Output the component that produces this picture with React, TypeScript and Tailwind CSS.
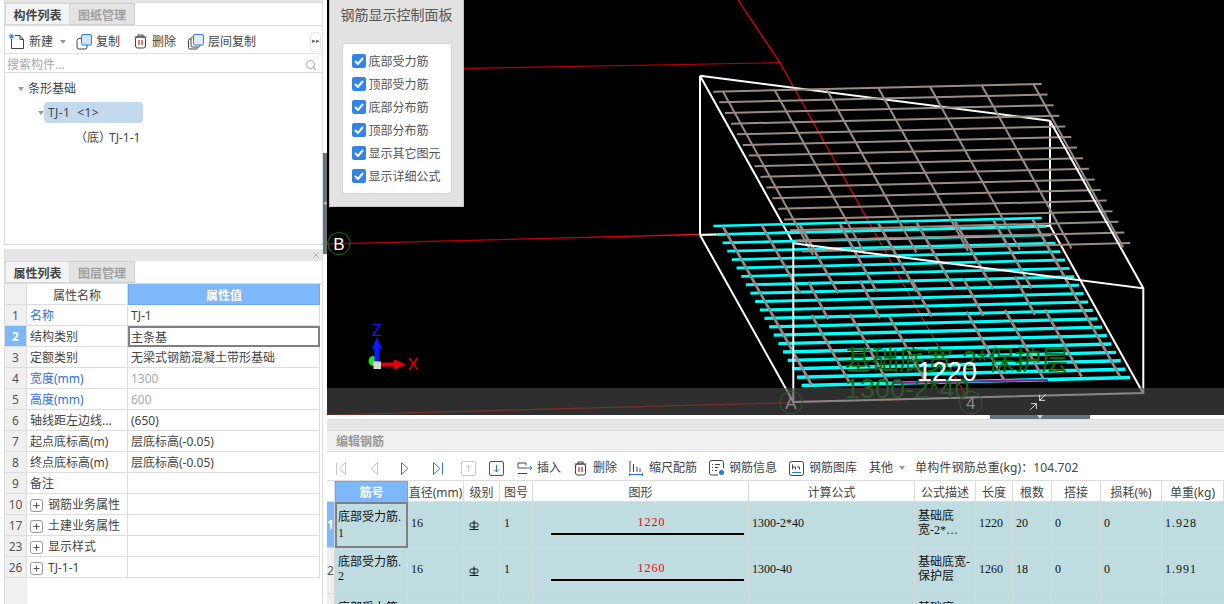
import React from 'react';
import { Minimize2, Search, X } from 'lucide-react';

const SANS = "[font-family:'Noto_Sans','Noto_Sans_CJK_SC',sans-serif]";

// ---------- small toolbar icons ----------
const IconNew = () => (
  <svg width="16" height="16" viewBox="0 0 16 16" fill="none">
    <path d="M2.500 5v9.500h12V5.500L11 1.500H6" stroke="#444" />
    <path d="M11 1.500v4h3.500" stroke="#444" />
    <rect x="0.500" y="0.500" width="4" height="4" fill="#3b8bf0" />
  </svg>
);

const IconCopy = () => (
  <svg width="17" height="16" viewBox="0 0 17 16" fill="none">
    <rect x="1" y="4.500" width="10" height="10.500" rx="2" stroke="#444" fill="#fff" />
    <rect x="5.500" y="0.500" width="10" height="10.500" rx="1.500" stroke="#2f7de0" fill="#cfe3fa" />
  </svg>
);

const IconTrash = () => (
  <svg width="13" height="15" viewBox="0 0 13 15" fill="none">
    <path d="M0.500 3h12M4 3V1h5v2" stroke="#444" />
    <rect x="1.500" y="3" width="10" height="11" rx="2" stroke="#444" />
    <path d="M5 6v5M8 6v5" stroke="#e02020" strokeWidth="1.200" />
  </svg>
);

const IconFloorCopy = () => (
  <svg width="16" height="16" viewBox="0 0 16 16" fill="none">
    <rect x="0.500" y="5" width="9" height="10" rx="1.500" stroke="#444" />
    <rect x="3" y="3" width="9" height="10" rx="1.500" stroke="#444" fill="#fff" />
    <rect x="5.500" y="0.500" width="10" height="10.500" rx="1.500" stroke="#2f7de0" fill="#e2eefc" />
  </svg>
);

const Caret = ({ className = '' }: { className?: string }) => (
  <svg width="6" height="4" viewBox="0 0 6 4" className={className}>
    <path d="M0 0h6L3 4z" fill="#999" />
  </svg>
);

const PlusBox = () => (
  <svg width="13" height="13" viewBox="0 0 13 13" fill="none" className="shrink-0">
    <rect x="0.500" y="0.500" width="12" height="12" rx="2.500" stroke="#999" />
    <path d="M3.500 6.500h6M6.500 3.500v6" stroke="#555" />
  </svg>
);

const NavIcon = ({ dir, bar, active }: { dir: 'l' | 'r'; bar?: boolean; active?: boolean }) => {
  const c = active ? '#2a78dc' : '#c4c4c4';
  return (
    <svg width="11" height="13" viewBox="0 0 11 13" fill="none">
      {dir === 'l' ? (
        <>
          {bar && <path d="M0.500 0.500v12" stroke={c} />}
          <path d="M9.500 0.500v12L3 6.500z" stroke={c} />
        </>
      ) : (
        <>
          <path d="M1.500 0.500v12L8 6.500z" stroke={c} />
          {bar && <path d="M10.500 0.500v12" stroke={c} />}
        </>
      )}
    </svg>
  );
};

const BoxArrow = ({ up }: { up?: boolean }) => (
  <svg width="15" height="15" viewBox="0 0 15 15" fill="none">
    <rect x="0.500" y="0.500" width="14" height="14" rx="1.500" stroke={up ? '#c8c8c8' : '#555'} />
    {up ? (
      <path d="M7.500 11V4M5 6.500l2.500-2.500L10 6.500" stroke="#c8c8c8" />
    ) : (
      <path d="M7.500 4v7M5 8.500l2.500 2.500L10 8.500" stroke="#2a78dc" />
    )}
  </svg>
);

const IconInsert = () => (
  <svg width="16" height="13" viewBox="0 0 16 13" fill="none">
    <path d="M9 3.500V1H1v5h8" stroke="#444" />
    <path d="M1 11.500h9" stroke="#444" />
    <path d="M9 6h6M13 4l2 2-2 2" stroke="#2a78dc" />
  </svg>
);

const IconScale = () => (
  <svg width="14" height="15" viewBox="0 0 14 15" fill="none">
    <path d="M1 0v11M4.500 3v8M8 6v5M11 7.500V11" stroke="#444" />
    <path d="M0.500 13.500h13M0.500 12v3M13.500 12v3" stroke="#2a78dc" />
  </svg>
);

const IconInfo = () => (
  <svg width="16" height="16" viewBox="0 0 16 16" fill="none">
    <path d="M9 15H2.500a2 2 0 0 1-2-2V2.500a2 2 0 0 1 2-2h10a2 2 0 0 1 2 2V8" stroke="#444" />
    <path d="M3 4.500h1M6 4.500h5M3 7.500h1M6 7.500h3M3 10.500h1M6 10.500h2" stroke="#444" />
    <circle cx="12.500" cy="12.500" r="2.500" fill="#2a78dc" />
  </svg>
);

const IconLibrary = () => (
  <svg width="15" height="15" viewBox="0 0 15 15" fill="none">
    <rect x="0.500" y="0.500" width="14" height="14" rx="2" stroke="#444" />
    <path d="M3.500 3.500v5M3.500 6h3v2.500M8 6h2.500v2.500" stroke="#444" />
    <path d="M3 11.500h9" stroke="#2a78dc" />
  </svg>
);

const GradeMark = () => (
  <svg width="10" height="10" viewBox="0 0 10 10" fill="none" className="mt-[3px]">
    <path d="M5 0.500v8.500" stroke="#111" />
    <rect x="1" y="3" width="8" height="4" rx="1.500" stroke="#111" />
    <path d="M0.500 9.500h9" stroke="#111" />
  </svg>
);

// ---------- left panels ----------
const Tabs = ({ first, second }: { first: string; second: string }) => (
  <div className="flex h-[23px] shrink-0 font-bold text-[12px] border-b border-[#ddd]">
    <div className="w-[65px] pt-[3px] bg-[#f4f4f4] border border-[#d8d8d8] flex items-center justify-center text-[#444]">{first}</div>
    <div className="w-[65px] pt-[3px] bg-[#e3e3e3] border border-l-0 border-[#cfcfcf] flex items-center justify-center text-[#a0a0a0]">{second}</div>
  </div>
);

const ComponentList = () => (
  <div className="h-[245px] shrink-0 flex flex-col border-l border-r border-b border-[#ddd]">
    <div className="h-[3px] bg-[#e6e6e6] shrink-0 border-b border-[#ddd]" />
    <Tabs first="构件列表" second="图纸管理" />
    <div className="h-[28px] shrink-0 pt-[4px] flex items-center text-[12px] text-[#444] border-b border-[#e2e2e2] relative">
      <div className="ml-[4px]"><IconNew /></div>
      <span className="ml-[4px]">新建</span>
      <Caret className="ml-[7px]" />
      <div className="ml-[10px]"><IconCopy /></div>
      <span className="ml-[3px]">复制</span>
      <div className="ml-[14px]"><IconTrash /></div>
      <span className="ml-[5px]">删除</span>
      <div className="ml-[12px]"><IconFloorCopy /></div>
      <span className="ml-[4px]">层间复制</span>
      <div className="ml-auto mr-[1px] w-[11px] h-[20px] border border-[#e6e6e6] rounded-sm flex items-center justify-center text-[7px] text-[#666]">▸▸</div>
    </div>
    <div className="h-[19px] shrink-0 pt-[3px] flex items-center justify-between pl-[2px] pr-[5px] text-[12px] text-[#aaa] border-b border-[#ddd]">
      <span>搜索构件...</span>
      <Search size={12} color="#aaa" />
    </div>
    <div className="text-[12px] text-[#444] pt-[5px]">
      <div className="h-[21px] flex items-center pl-[13px]">
        <Caret />
        <span className="ml-[4px]">条形基础</span>
      </div>
      <div className="h-[21px] mt-[3px] flex items-center pl-[33px]">
        <Caret />
        <div className="w-[99px] h-[21px] pt-[1px] bg-[#c2d9f0] rounded-sm flex items-center pl-[4px] whitespace-pre tracking-[0.4px]">TJ-1  &lt;1&gt;</div>
      </div>
      <div className="h-[21px] mt-[4px] flex items-center pl-[70px] whitespace-pre">（底）<span className="-ml-[2px]">TJ-1-1</span></div>
    </div>
  </div>
);

type PropRow = { no: number; name: string; value?: string; nameBlue?: boolean; gray?: boolean; plus?: boolean; active?: boolean };

const PROPS: PropRow[] = [
  { no: 1, name: '名称', value: 'TJ-1', nameBlue: true },
  { no: 2, name: '结构类别', value: '主条基', active: true },
  { no: 3, name: '定额类别', value: '无梁式钢筋混凝土带形基础' },
  { no: 4, name: '宽度(mm)', value: '1300', nameBlue: true, gray: true },
  { no: 5, name: '高度(mm)', value: '600', nameBlue: true, gray: true },
  { no: 6, name: '轴线距左边线...', value: '(650)' },
  { no: 7, name: '起点底标高(m)', value: '层底标高(-0.05)' },
  { no: 8, name: '终点底标高(m)', value: '层底标高(-0.05)' },
  { no: 9, name: '备注' },
  { no: 10, name: '钢筋业务属性', plus: true },
  { no: 17, name: '土建业务属性', plus: true },
  { no: 23, name: '显示样式', plus: true },
  { no: 26, name: 'TJ-1-1', plus: true }
];

const PropertyList = () => (
  <div className="flex-1 flex flex-col border-l border-r border-[#ddd] mt-[4px] min-h-0">
    <div className="h-[12px] shrink-0 bg-[#e6e6e6] flex items-center justify-end pr-[1px]">
      <X size={10} color="#aaa" />
    </div>
    <Tabs first="属性列表" second="图层管理" />
    <div className="flex-1 grid grid-cols-[22px_101px_192px] auto-rows-[21px] content-start text-[12px] text-[#444] relative">
      <div className="bg-[#f0f0f0] border-b border-r border-[#ddd] h-[21px]" />
      <div className="pt-[3px] border-b border-r border-[#ddd] flex items-center justify-center">属性名称</div>
      <div className="pt-[3px] bg-[#7eb8fa] text-white font-bold border border-t-0 border-[#6aa9ef] flex items-center justify-center">属性值</div>
      {PROPS.map((p) => (
        <React.Fragment key={p.no}>
          <div className={`pt-[2px] border-b border-r border-[#ddd] flex items-center justify-center ${p.active ? 'bg-[#7eb8fa] text-white font-bold' : 'bg-[#f0f0f0] text-[#555]'}`}>{p.no}</div>
          <div className={`pt-[2px] border-b border-r border-[#ddd] flex items-center pl-[3px] gap-[5px] whitespace-nowrap overflow-hidden ${p.nameBlue ? 'text-[#2f6fe4]' : ''}`}>
            {p.plus && <PlusBox />}
            {p.name}
          </div>
          <div className={`pt-[2px] flex items-center ${p.active ? 'pl-[1px] border-2 border-[#808080]' : 'pl-[3px] border-b border-r border-[#ddd]'} ${p.gray ? 'text-[#aaa]' : ''}`}>{p.value}</div>
        </React.Fragment>
      ))}
      <div className="absolute left-0 top-[294px] bottom-0 w-[22px] bg-[#f0f0f0]" />
    </div>
  </div>
);

// ---------- 3D viewport ----------
const range = (n: number) => Array.from({ length: n }, (_, i) => i);

// distribution bars of the lower mesh, in 3x coordinates of the crop at (680,210)
const LOWER_BARS = [
  [128, 48, 395, 525], [245, 45, 360, 250], [360, 45, 475, 250], [480, 42, 590, 245],
  [595, 40, 710, 245], [710, 38, 825, 240], [825, 35, 940, 238], [940, 30, 1055, 235],
  [1058, 28, 1320, 500], [385, 215, 445, 328], [540, 212, 600, 325], [695, 210, 755, 320],
  [850, 205, 910, 318], [1005, 200, 1065, 315], [395, 315, 510, 520], [510, 312, 625, 520],
  [628, 320, 740, 520], [860, 305, 975, 515], [975, 300, 1090, 505], [1095, 298, 1205, 500]
];

const Nonagon = ({ cx, cy, label }: { cx: number; cy: number; label: string }) => {
  const pts = range(9)
    .map((i) => {
      const a = (i / 9) * Math.PI * 2 - Math.PI / 2;
      return `${cx + Math.cos(a) * 11.5},${cy + Math.sin(a) * 11.5}`;
    })
    .join(' ');
  return (
    <g>
      <polygon points={pts} fill="none" stroke="#0a7a0a" strokeWidth="1" />
      <text x={cx} y={cy + 6} textAnchor="middle" fontSize="17" fill="#fff" fontFamily="'Liberation Sans', sans-serif">{label}</text>
    </g>
  );
};

const Scene = () => (
  <svg viewBox="327 0 897 415" width="897" height="415" className="block">
    <defs>
      <linearGradient id="axisB" x1="0" x2="1" y1="0" y2="0">
        <stop offset="0" stopColor="#a00000" />
        <stop offset="0.85" stopColor="#e00000" />
        <stop offset="1" stopColor="#ff3030" />
      </linearGradient>
    </defs>
    {/* grid axes */}
    <path d="M329 70.900L780 62.700" stroke="#b80000" strokeWidth="1.200" />
    <path d="M738 0L780 62.700L967 398" stroke="#f00000" strokeWidth="1.200" fill="none" />
    <path d="M327 244L716 234" stroke="url(#axisB)" strokeWidth="1.300" />
    <path d="M327 415L967 398" stroke="#e00000" strokeWidth="1.200" />

    {/* back wire frame */}
    <path d="M700 75.700L1050 120.700M700 75.700V235M700 75.700L793.300 243.300M1050 120.700V225.700M700 235L1050 225.700M700 235L793.300 402M1050 225.700L1143 393" stroke="#fff" strokeWidth="2" fill="none" />

    {/* lower mesh */}
    {range(20).map((i) => (
      <line key={i} x1={713.3 + i * 4.65} y1={226 + i * 8.4} x2={1041.7 + i * 4.65} y2={218 + i * 8.4} stroke="#00ffff" strokeWidth={2.6 + i * 0.05} />
    ))}
    <g transform="translate(680 210) scale(0.3333)">
      {LOWER_BARS.map(([a, b, c, d], i) => (
        <line key={i} x1={a} y1={b} x2={c} y2={d} stroke="#948a85" strokeWidth="8" />
      ))}
    </g>

    {/* upper mesh */}
    {range(16).map((i) => (
      <line key={i} x1={713.3 + i * 5.9} y1={91.7 + i * 10.65} x2={1041.7 + i * 5.9} y2={84 + i * 10.6} stroke="#9a8c84" strokeWidth="2" />
    ))}
    {range(7).map((i) => (
      <line key={i} x1={723.3 + i * 51.7} y1={92 - i * 1.3} x2={813 + i * 51.7} y2={255 - i * 1.3} stroke="#9a8c84" strokeWidth="2" />
    ))}

    {/* front wire frame */}
    <path d="M793.300 243.300L1143.300 288.300V393L793.300 402V243.300M1050 120.700L1143.300 288.300" stroke="#fff" strokeWidth="2" fill="none" />

    {/* annotation */}
    <path d="M893 383L1048 380" stroke="#8a1a9a" strokeWidth="2" />
    <text x="845" y="370" fontSize="27" fill="#0b6e0b" fontFamily="'Liberation Sans','Noto Sans CJK SC',sans-serif">基础底宽-2*保护层</text>
    <text x="845" y="398" fontSize="27" fill="#0b6e0b" fontFamily="'Liberation Sans',sans-serif">1300-2*40</text>
    <text x="917" y="381" fontSize="27" fill="#fff" fontFamily="'Liberation Sans',sans-serif">1220</text>

    {/* axis bubbles */}
    <Nonagon cx={339} cy={243.5} label="B" />
    <Nonagon cx={791} cy={402.5} label="A" />
    <Nonagon cx={970.7} cy={402.5} label="4" />

    {/* xyz gizmo */}
    <circle cx="373.500" cy="361" r="5" fill="#22e022" />
    <path d="M374.500 361V349H372L377 337L382 349H379.500V361z" fill="#0a1aff" />
    <path d="M378 362.500H394V359.500L406 364.500L394 369.500V366.500H378z" fill="#e80000" />
    <rect x="373.500" y="361.500" width="7.500" height="7.500" fill="#d8d8d8" />
    <text x="377" y="336" textAnchor="middle" fontSize="16" fill="#0a1aff" fontFamily="'Liberation Sans',sans-serif">Z</text>
    <text x="413" y="370" textAnchor="middle" fontSize="16" fill="#e80000" fontFamily="'Liberation Sans',sans-serif">X</text>
  </svg>
);

const CHECKS = ['底部受力筋', '顶部受力筋', '底部分布筋', '顶部分布筋', '显示其它图元', '显示详细公式'];

const Viewport = () => (
  <div className="h-[415px] shrink-0 bg-black relative overflow-hidden">
    <Scene />
    {/* control panel */}
    <div className="absolute left-[2px] top-0 w-[135px] h-[207px] bg-[#e2e2e2] border-r border-b border-l border-[#c4c4c4] flex flex-col items-center">
      <div className="mt-[7px] text-[14px] leading-[16px] text-[#555]">钢筋显示控制面板</div>
      <div className="mt-[20px] w-[110px] h-[151px] bg-white border border-[#d4d4d4] rounded-[3px] flex flex-col pl-[9px] pt-[10px] gap-[9px]">
        {CHECKS.map((c) => (
          <label key={c} className="flex items-center gap-[3px] h-[14px] text-[12px] text-[#555] whitespace-nowrap">
            <span className="w-[14px] h-[14px] rounded-[2px] bg-[#3384e8] flex items-center justify-center shrink-0">
              <svg width="10" height="8" viewBox="0 0 10 8" fill="none">
                <path d="M1 4l3 3 5-6" stroke="#fff" strokeWidth="2" />
              </svg>
            </span>
            <span className="pt-[2px]">{c}</span>
          </label>
        ))}
      </div>
    </div>
    {/* status band */}
    <div className="absolute left-0 right-0 bottom-0 h-[27px] bg-[#474747]/65 flex items-center justify-end pr-[176px]">
      <Minimize2 size={20} color="#fff" strokeWidth={1} />
    </div>
  </div>
);

// ---------- rebar table ----------
type Bar = { no: string; dia: string; fig: string; formula: string; desc: string[]; len: string; count: string; weight: string };

const BARS: Bar[] = [
  { no: '1', dia: '16', fig: '1220', formula: '1300-2*40', desc: ['基础底', '宽-2*…'], len: '1220', count: '20', weight: '1.928' },
  { no: '2', dia: '16', fig: '1260', formula: '1300-40', desc: ['基础底宽-', '保护层'], len: '1260', count: '18', weight: '1.991' },
  { no: '3', dia: '', fig: '', formula: '', desc: ['基础底', '宽'], len: '', count: '', weight: '' }
];

const COLS = 'grid-cols-[8px_73px_56px_36px_33px_216px_166px_61px_37px_39px_49px_61px_62px]';
const HEADS = ['筋号', '直径(mm)', '级别', '图号', '图形', '计算公式', '公式描述', '长度', '根数', '搭接', '损耗(%)', '单重(kg)'];

const BODY_FONT = "[font-family:'Liberation_Serif','Noto_Sans_CJK_SC',serif]";
const CELL = 'flex items-center pl-[3px] pb-[3px] border-b border-r border-[#d8d8d8]';

const RebarTable = () => (
  <div className="flex-1 min-h-0 overflow-hidden">
    <div className={`grid ${COLS} h-[21px] text-[12px] text-[#444] border-b border-[#ddd]`}>
      <div className="border-r border-[#ddd]" />
      {HEADS.map((h, i) => (
        <div key={h} className={`pt-[2px] flex items-center justify-center whitespace-nowrap border-r ${i === 0 ? 'bg-[#7eb8fa] text-white font-bold border border-[#6aa9ef]' : 'border-[#ddd]'}`}>{h}</div>
      ))}
    </div>
    {BARS.map((b, i) => (
      <div key={b.no} className={`grid ${COLS} h-[46px] bg-[#bfdde0] text-[12px] leading-[14px] text-[#111] ${BODY_FONT}`}>
        <div className={`flex items-center justify-center border-b border-r border-[#d8d8d8] ${SANS} ${i === 0 ? 'bg-[#7eb8fa] text-white font-bold' : 'bg-[#eee] text-[#555]'}`}>{i + 1}</div>
        <div className={`flex items-center ${i === 0 ? 'pl-[1px] leading-[16px] border-2 border-[#808080]' : 'pl-[3px] pb-[3px] border-b border-r border-[#d8d8d8]'}`}>
          <div>
            底部受力筋.
            <br />
            {b.no}
          </div>
        </div>
        <div className={CELL}>{b.dia}</div>
        <div className={`${CELL} pl-[5px]`}>{b.dia && <GradeMark />}</div>
        <div className={`${CELL} pl-[4px]`}>{b.dia && '1'}</div>
        <div className="flex flex-col items-center pt-[14px] pl-[14px] border-b border-r border-[#d8d8d8]">
          {b.fig && (
            <>
              <span className="text-[#f00000] h-[14px] tracking-[1px] ml-[8px] -mt-[1px]">{b.fig}</span>
              <span className="w-[193px] h-[2px] bg-black mt-[4px]" />
            </>
          )}
        </div>
        <div className={CELL}>{b.formula}</div>
        <div className={CELL}>
          <div>
            {b.desc[0]}
            <br />
            {b.desc[1]}
          </div>
        </div>
        <div className={CELL}>{b.len}</div>
        <div className={CELL}>{b.count}</div>
        <div className={CELL}>{b.dia && '0'}</div>
        <div className={CELL}>{b.dia && '0'}</div>
        <div className={`${CELL} tracking-[1px] border-r-0`}>{b.weight}</div>
      </div>
    ))}
  </div>
);

const RebarToolbar = () => (
  <div className="h-[29px] shrink-0 pt-[4px] flex items-center text-[12px] text-[#444] border-b border-[#ddd]">
    <div className="ml-[9px]"><NavIcon dir="l" bar /></div>
    <div className="ml-[21px]"><NavIcon dir="l" /></div>
    <div className="ml-[21px]"><NavIcon dir="r" active /></div>
    <div className="ml-[21px]"><NavIcon dir="r" bar active /></div>
    <div className="ml-[18px]"><BoxArrow up /></div>
    <div className="ml-[13px]"><BoxArrow /></div>
    <div className="ml-[13px]"><IconInsert /></div>
    <span className="ml-[4px]">插入</span>
    <div className="ml-[13px]"><IconTrash /></div>
    <span className="ml-[6px]">删除</span>
    <div className="ml-[12px]"><IconScale /></div>
    <span className="ml-[6px]">缩尺配筋</span>
    <div className="ml-[12px]"><IconInfo /></div>
    <span className="ml-[4px]">钢筋信息</span>
    <div className="ml-[12px]"><IconLibrary /></div>
    <span className="ml-[5px]">钢筋图库</span>
    <span className="ml-[12px]">其他</span>
    <Caret className="ml-[6px]" />
    <span className="ml-[10px] tracking-[0.1px]">单构件钢筋总重(kg)：104.702</span>
  </div>
);

export default function App() {
  return (
    <div className={`w-[1224px] h-[604px] overflow-hidden flex bg-white ${SANS}`}>
      <div className="w-[323px] shrink-0 pl-[4px] flex flex-col">
        <ComponentList />
        <PropertyList />
      </div>
      {/* splitter */}
      <div className="w-[4px] shrink-0 pt-[153px]">
        <div className="h-[101px] bg-[#667280] flex items-center justify-center text-[7px] text-[#bbb]">◂</div>
      </div>
      <div className="w-[897px] shrink-0 flex flex-col">
        <Viewport />
        <div className="h-[4px] shrink-0 bg-white flex pl-[663px]">
          <div className="w-[100px] h-[4px] bg-[#667280] flex justify-center">
            <svg width="6" height="4" viewBox="0 0 6 4"><path d="M0 0h6L3 4z" fill="#ccc" /></svg>
          </div>
        </div>
        <div className="h-[11px] shrink-0 bg-[#e6e6e6] border-t border-[#ddd]" />
        <div className="h-[22px] shrink-0 pt-[2px] bg-[#f0f0f0] border-t border-b border-[#ddd] flex items-center pl-[9px] text-[12px] font-bold text-[#999]">编辑钢筋</div>
        <RebarToolbar />
        <RebarTable />
      </div>
    </div>
  );
}
